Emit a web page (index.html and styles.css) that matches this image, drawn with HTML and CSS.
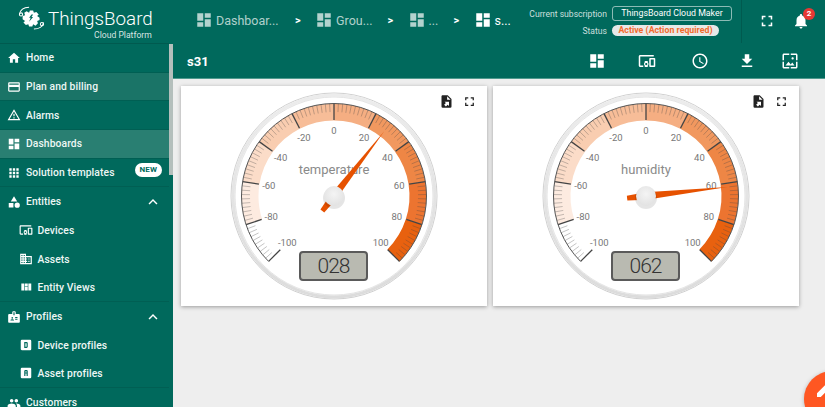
FILE: index.html
```html
<!DOCTYPE html>
<html lang="en">
<head>
    <meta charset="UTF-8">
    <title>ThingsBoard - s31</title>
    <link rel="stylesheet" href="styles.css">
</head>
<body>
    <!-- Material icons used more than once -->
    <svg class="sprite">
        <symbol id="i-dashboard" viewBox="0 0 24 24"><path d="M3 13h8V3H3v10zm0 8h8v-6H3v6zm10 0h8V11h-8v10zm0-18v6h8V3h-8z"/></symbol>
        <symbol id="i-less" viewBox="0 0 24 24"><path d="M12 8l-6 6 1.41 1.41L12 10.83l4.59 4.58L18 14z"/></symbol>
        <symbol id="i-fullscreen" viewBox="0 0 24 24"><path d="M7 14H5v5h5v-2H7v-3zm-2-4h2V7h3V5H5v5zm12 7h-3v2h5v-5h-2v3zM14 5v2h3v3h2V5h-5z"/></symbol>
        <symbol id="i-export" viewBox="0 0 24 24"><path d="M6 2C4.89 2 4 2.9 4 4v16a2 2 0 0 0 2 2h12a2 2 0 0 0 2-2V8l-6-6M13 3.5L18.5 9H13M8.93 12.22H16v7.07l-2.12-2.12L11.05 20l-2.83-2.83 2.83-2.82"/></symbol>
    </svg>

    <div class="app">
        <aside class="sidebar">
            <div class="logo">
                <svg class="logo-mark" viewBox="0 0 36 32">
                    <path class="logo-wire" d="M3 11C4 5 9 2 15 2M33 21c-1 5-6 8-12 8"/>
                    <circle class="logo-wire" cx="5" cy="11" r="2"/>
                    <circle class="logo-wire" cx="31" cy="23" r="2"/>
                    <path class="logo-gear" fill-rule="evenodd" d="M16 6h4l1 3 3-1 3 3-2 2 3 2v3l-3 1 1 3-3 3-3-2-1 3h-4l-1-3-3 1-3-3 2-2-3-2v-4l3-1-1-3 3-2 3 2zM18 11l-3 4h2l-2 5 5-6h-2l2-3z"/>
                </svg>
                <div class="logo-text">
                    <span class="logo-name">ThingsBoard</span>
                    <span class="logo-sub">Cloud Platform</span>
                </div>
            </div>
            <nav class="menu">
                <a class="menu-item">
                    <svg class="menu-icon" viewBox="0 0 24 24"><path d="M10 20v-6h4v6h5v-8h3L12 3 2 12h3v8z"/></svg>Home
                </a>
                <a class="menu-item tint">
                    <svg class="menu-icon" viewBox="0 0 24 24"><path d="M20 4H4c-1.11 0-1.99.89-1.99 2L2 18c0 1.11.89 2 2 2h16c1.11 0 2-.89 2-2V6c0-1.11-.89-2-2-2zm0 14H4v-6h16v6zm0-10H4V6h16v2z"/></svg>Plan and billing
                </a>
                <a class="menu-item">
                    <svg class="menu-icon" viewBox="0 0 24 24"><path d="M12 5.99L19.53 19H4.47L12 5.99M12 2L1 21h22L12 2zm1 14h-2v2h2v-2zm0-6h-2v4h2v-4z"/></svg>Alarms
                </a>
                <a class="menu-item active">
                    <svg class="menu-icon"><use href="#i-dashboard"/></svg>Dashboards
                </a>
                <a class="menu-item">
                    <svg class="menu-icon" viewBox="0 0 24 24"><path d="M4 8h4V4H4v4zm6 12h4v-4h-4v4zm-6 0h4v-4H4v4zm0-6h4v-4H4v4zm6 0h4v-4h-4v4zm6-10v4h4V4h-4zm-6 4h4V4h-4v4zm6 6h4v-4h-4v4zm0 6h4v-4h-4v4z"/></svg>Solution templates
                    <span class="new-badge">NEW</span>
                </a>
                <a class="menu-item">
                    <svg class="menu-icon" viewBox="0 0 24 24"><path d="M12 2l-5.5 9h11L12 2zm5.5 11a4.5 4.5 0 1 0 0 9 4.5 4.5 0 0 0 0-9zM3 21.5h8v-8H3v8z"/></svg>Entities
                    <svg class="menu-arrow"><use href="#i-less"/></svg>
                </a>
                <a class="menu-item sub">
                    <svg class="menu-icon" viewBox="0 0 24 24"><path d="M3 6h18V4H3c-1.1 0-2 .9-2 2v12c0 1.1.9 2 2 2h4v-2H3V6zm10 6H9v1.78c-.61.55-1 1.33-1 2.22s.39 1.67 1 2.22V20h4v-1.78c.61-.55 1-1.34 1-2.22s-.39-1.67-1-2.22V12zm-2 5.5c-.83 0-1.5-.67-1.5-1.5s.67-1.5 1.5-1.5 1.5.67 1.5 1.5-.67 1.5-1.5 1.5zM22 8h-6c-.5 0-1 .5-1 1v10c0 .5.5 1 1 1h6c.5 0 1-.5 1-1V9c0-.5-.5-1-1-1zm-1 10h-4v-8h4v8z"/></svg>Devices
                </a>
                <a class="menu-item sub">
                    <svg class="menu-icon" viewBox="0 0 24 24"><path d="M12 7V3H2v18h20V7H12zM6 19H4v-2h2v2zm0-4H4v-2h2v2zm0-4H4V9h2v2zm0-4H4V5h2v2zm4 12H8v-2h2v2zm0-4H8v-2h2v2zm0-4H8V9h2v2zm0-4H8V5h2v2zm10 12h-8v-2h2v-2h-2v-2h2v-2h-2V9h8v10zm-2-8h-2v2h2v-2zm0 4h-2v2h2v-2z"/></svg>Assets
                </a>
                <a class="menu-item sub">
                    <svg class="menu-icon" viewBox="0 0 24 24"><path d="M10 18h5v-6h-5v6zm-6 0h5V6H4v12zm12 0h5V6h-5v12zM10 6v5h5V6h-5z"/></svg>Entity Views
                </a>
                <a class="menu-item">
                    <svg class="menu-icon" viewBox="0 0 24 24"><path d="M20 7h-5V4c0-1.1-.9-2-2-2h-2c-1.1 0-2 .9-2 2v3H4c-1.1 0-2 .9-2 2v11c0 1.1.9 2 2 2h16c1.1 0 2-.9 2-2V9c0-1.1-.9-2-2-2zM9 12c.83 0 1.5.67 1.5 1.5S9.83 15 9 15s-1.5-.67-1.5-1.5S8.17 12 9 12zm3 6H6v-.75c0-1 2-1.5 3-1.5s3 .5 3 1.5V18zm1-9h-2V4h2v5zm5 7.5h-4V15h4v1.5zm0-3h-4V12h4v1.5z"/></svg>Profiles
                    <svg class="menu-arrow"><use href="#i-less"/></svg>
                </a>
                <a class="menu-item sub">
                    <svg class="menu-icon" viewBox="0 0 24 24"><path d="M9 7v10h4a2 2 0 0 0 2-2V9a2 2 0 0 0-2-2H9m2 2h2v6h-2V9M5 3h14a2 2 0 0 1 2 2v14a2 2 0 0 1-2 2H5c-1.11 0-2-.9-2-2V5a2 2 0 0 1 2-2z"/></svg>Device profiles
                </a>
                <a class="menu-item sub">
                    <svg class="menu-icon" viewBox="0 0 24 24"><path d="M11 7a2 2 0 0 0-2 2v8h2v-4h2v4h2V9a2 2 0 0 0-2-2h-2m0 2h2v2h-2V9M5 3h14a2 2 0 0 1 2 2v14a2 2 0 0 1-2 2H5a2 2 0 0 1-2-2V5a2 2 0 0 1 2-2z"/></svg>Asset profiles
                </a>
                <a class="menu-item">
                    <svg class="menu-icon" viewBox="0 0 24 24"><path d="M16 11c1.66 0 2.99-1.34 2.99-3S17.66 5 16 5c-1.66 0-3 1.34-3 3s1.34 3 3 3zm-8 0c1.66 0 2.99-1.34 2.99-3S9.66 5 8 5C6.34 5 5 6.34 5 8s1.34 3 3 3zm0 2c-2.33 0-7 1.17-7 3.5V19h14v-2.5c0-2.33-4.67-3.5-7-3.5zm8 0c-.29 0-.62.02-.97.05 1.16.84 1.97 1.97 1.97 3.45V19h6v-2.5c0-2.33-4.67-3.5-7-3.5z"/></svg>Customers
                </a>
            </nav>
            <div class="scroll-thumb"></div>
        </aside>

        <div class="main">
            <header class="topbar">
                <div class="crumbs">
                    <span class="crumb crumb-first"><svg class="crumb-icon"><use href="#i-dashboard"/></svg>Dashboar...</span>
                    <span class="crumb-sep">&gt;</span>
                    <span class="crumb crumb-second"><svg class="crumb-icon"><use href="#i-dashboard"/></svg>Grou...</span>
                    <span class="crumb-sep">&gt;</span>
                    <span class="crumb crumb-third"><svg class="crumb-icon"><use href="#i-dashboard"/></svg>...</span>
                    <span class="crumb-sep">&gt;</span>
                    <span class="crumb current"><svg class="crumb-icon"><use href="#i-dashboard"/></svg>s...</span>
                </div>
                <div class="subscription">
                    <span class="sub-label">Current subscription</span>
                    <span class="plan-name">ThingsBoard Cloud Maker</span>
                    <span class="sub-label">Status</span>
                    <span class="plan-status">Active (Action required)</span>
                </div>
                <div class="top-actions">
                    <svg class="top-icon"><use href="#i-fullscreen"/></svg>
                    <span class="bell">
                        <svg class="top-icon" viewBox="0 0 24 24"><path d="M12 22c1.1 0 2-.9 2-2h-4c0 1.1.89 2 2 2zm6-6v-5c0-3.07-1.64-5.64-4.5-6.32V4c0-.83-.67-1.5-1.5-1.5s-1.5.67-1.5 1.5v.68C7.63 5.36 6 7.92 6 11v5l-2 2v1h16v-1l-2-2z"/></svg>
                        <span class="bell-count">2</span>
                    </span>
                </div>
            </header>

            <div class="titlebar">
                <h1 class="dash-title">s31</h1>
                <div class="title-actions">
                    <svg class="title-icon"><use href="#i-dashboard"/></svg>
                    <svg class="title-icon" viewBox="0 0 24 24"><path d="M3 6h18V4H3c-1.1 0-2 .9-2 2v12c0 1.1.9 2 2 2h4v-2H3V6zm10 6H9v1.78c-.61.55-1 1.33-1 2.22s.39 1.67 1 2.22V20h4v-1.78c.61-.55 1-1.34 1-2.22s-.39-1.67-1-2.22V12zm-2 5.5c-.83 0-1.5-.67-1.5-1.5s.67-1.5 1.5-1.5 1.5.67 1.5 1.5-.67 1.5-1.5 1.5zM22 8h-6c-.5 0-1 .5-1 1v10c0 .5.5 1 1 1h6c.5 0 1-.5 1-1V9c0-.5-.5-1-1-1zm-1 10h-4v-8h4v8z"/></svg>
                    <svg class="title-icon" viewBox="0 0 24 24"><path d="M11.99 2C6.47 2 2 6.48 2 12s4.47 10 9.99 10C17.52 22 22 17.52 22 12S17.52 2 11.99 2zM12 20c-4.42 0-8-3.58-8-8s3.58-8 8-8 8 3.58 8 8-3.58 8-8 8zm.5-13H11v6l5.25 3.15.75-1.23-4.5-2.67z"/></svg>
                    <svg class="title-icon" viewBox="0 0 24 24"><path d="M19 9h-4V3H9v6H5l7 7 7-7zM5 18v2h14v-2H5z"/></svg>
                    <svg class="title-icon" viewBox="0 0 24 24"><path d="M4 4h7V2H4c-1.1 0-2 .9-2 2v7h2V4zm6 9l-4 5h12l-3-4-2.03 2.71L10 13zm7-4.5c0-.83-.67-1.5-1.5-1.5S14 7.67 14 8.5s.67 1.5 1.5 1.5S17 9.33 17 8.5zM20 2h-7v2h7v7h2V4c0-1.1-.9-2-2-2zm0 18h-7v2h7c1.1 0 2-.9 2-2v-7h-2v7zM4 13H2v7c0 1.1.9 2 2 2h7v-2H4v-7z"/></svg>
                </div>
            </div>

            <main class="widgets">
                <section class="widget" data-label="temperature" data-value="28"></section>
                <section class="widget" data-label="humidity" data-value="62"></section>
            </main>

            <button class="fab">
                <svg class="fab-icon" viewBox="0 0 24 24"><path d="M3 17.25V21h3.75L17.81 9.94l-3.75-3.75L3 17.25zM20.71 7.04a1 1 0 0 0 0-1.41l-2.34-2.34a1 1 0 0 0-1.41 0l-1.83 1.83 3.75 3.75 1.83-1.83z"/></svg>
            </button>
        </div>
    </div>

    <script src="script.js"></script>
</body>
</html>
```

FILE: styles.css
```css
* {
    box-sizing: border-box;
    margin: 0;
    padding: 0;
}

html, body {
    height: 100%;
    overflow: hidden;
}

body {
    font-family: Roboto, sans-serif;
    background-color: #eeeeee;
}

.sprite {
    display: none;
}

.app {
    display: flex;
    height: 407px;
}

/* Sidebar */
.sidebar {
    position: relative;
    flex: 0 0 173px;
    padding-right: 4px;
    background-color: #00695c;
    color: white;
    overflow: hidden;
}

.logo {
    display: flex;
    height: 44px;
    padding: 4px 0 0 17px;
    gap: 2px;
    border-bottom: 1px solid #005a4f;
}

.logo-mark {
    width: 29px;
    height: 29px;
    flex: none;
}

.logo-wire {
    fill: none;
    stroke: white;
    stroke-width: 1.3;
}

.logo-gear {
    fill: white;
}

.logo-text {
    display: flex;
    flex-direction: column;
    align-items: flex-end;
}

.logo-name {
    font-size: 18.8px;
    font-weight: 300;
    line-height: 24px;
    margin-top: 3px;
}

.logo-sub {
    font-size: 8.6px;
    line-height: 9px;
    margin-right: 1px;
    color: rgba(255,255,255,0.85);
}

.menu-item {
    display: flex;
    align-items: center;
    height: 28.7px;
    padding-left: 7px;
    font-size: 10.3px;
    font-weight: 500;
    letter-spacing: 0.1px;
    color: #eef7f5;
}

.menu-item:nth-child(-n+5),
.menu-item:nth-child(9),
.menu-item:nth-child(12) {
    border-bottom: 1px solid #005f53;
}

.menu-item.sub {
    padding-left: 19px;
}

.menu-item.tint {
    background-color: #1a7467;
}

.menu-item.active {
    background-color: #297f72;
}

.menu-icon {
    width: 14px;
    height: 14px;
    margin-right: 5px;
    fill: white;
    flex: none;
}

.menu-item.sub .menu-icon {
    margin-right: 4.5px;
}

.menu-arrow {
    width: 18px;
    height: 18px;
    margin-left: auto;
    margin-right: 7px;
    fill: white;
}

.new-badge {
    margin-left: auto;
    margin-right: 7px;
    margin-bottom: 6px;
    padding: 0 5px;
    height: 14px;
    line-height: 14px;
    border-radius: 7px;
    background: white;
    color: #00695c;
    font-size: 8px;
    font-weight: 700;
}

.scroll-thumb {
    position: absolute;
    top: 44px;
    right: 0;
    width: 4px;
    height: 131px;
    background-color: #b4bfbc;
}

/* Top bars */
.main {
    position: relative;
    flex: 1;
    min-width: 0;
    overflow: hidden;
}

.topbar {
    display: flex;
    align-items: flex-start;
    height: 44px;
    background-color: #00695c;
    color: white;
}

.crumbs {
    display: flex;
    align-items: center;
    height: 40px;
    padding-left: 22px;
    flex: none;
    width: 342px;
    font-size: 12.5px;
    color: rgba(255,255,255,0.7);
}

.crumb {
    display: flex;
    align-items: center;
    gap: 3px;
}

.crumb-first {
    width: 100px;
}

.crumb-second {
    width: 72.5px;
}

.crumb-third {
    width: 46px;
}

.crumb.current {
    color: white;
}

.crumb-icon {
    width: 18px;
    height: 18px;
    flex: none;
    fill: rgba(255,255,255,0.7);
}

.current .crumb-icon {
    fill: white;
}

.crumb-sep {
    width: 20px;
    font-size: 11px;
    font-weight: 700;
    color: white;
}

.subscription {
    display: grid;
    grid-template-columns: 92px auto;
    justify-content: start;
    align-items: center;
    column-gap: 5px;
    row-gap: 4px;
    width: 227px;
    height: 43px;
    padding-top: 6px;
    align-content: start;
    border-right: 1px solid #005a4f;
    font-size: 8.8px;
}

.sub-label {
    text-align: right;
    font-size: 8.6px;
    color: rgba(255,255,255,0.8);
}

.plan-name {
    width: 120px;
    height: 15px;
    line-height: 13px;
    text-align: center;
    border: 1px solid rgba(255,255,255,0.55);
    border-radius: 3px;
}

.plan-status {
    width: 107px;
    height: 11px;
    line-height: 11px;
    text-align: center;
    border-radius: 6px;
    background-color: #e6e9e8;
    color: #f26b2e;
    font-weight: 700;
}

.top-actions {
    display: flex;
    align-items: center;
    height: 41px;
    padding-left: 16px;
    gap: 16px;
}

.top-icon {
    width: 18px;
    height: 18px;
    fill: white;
    display: block;
}

.bell {
    position: relative;
}

.bell-count {
    position: absolute;
    top: -4px;
    right: -5px;
    width: 12px;
    height: 12px;
    line-height: 12px;
    border-radius: 50%;
    text-align: center;
    background-color: #e53935;
    font-size: 8px;
    font-weight: 700;
}

.titlebar {
    display: flex;
    align-items: center;
    height: 35px;
    padding-left: 14px;
    background-color: #00695c;
    border-bottom: 1px solid #4f9a8e;
    color: white;
}

.dash-title {
    font-size: 13px;
    font-weight: 700;
}

.title-actions {
    display: flex;
    align-items: center;
    margin-left: auto;
    margin-right: 26px;
}

.title-icon {
    width: 18px;
    height: 18px;
    fill: white;
}

/* The five buttons are not evenly spaced */
.title-icon:nth-child(2) {
    margin-left: 32px;
}

.title-icon:nth-child(3) {
    margin-left: 35px;
}

.title-icon:nth-child(4) {
    margin-left: 29px;
}

.title-icon:nth-child(5) {
    margin-left: 25px;
}

/* Gauge widgets */
.widgets {
    display: flex;
    gap: 6.5px;
    padding: 7px 0 0 8px;
}

.widget {
    position: relative;
    display: flex;
    justify-content: center;
    align-items: center;
    flex: 0 0 305.5px;
    height: 220px;
    background: white;
    box-shadow: 0 1px 4px rgba(0,0,0,0.35);
}

.widget-tools {
    position: absolute;
    top: 8px;
    right: 10px;
    display: flex;
    gap: 8px;
}

.widget-tool {
    width: 15px;
    height: 15px;
    fill: #222;
}

.gauge {
    width: 210px;
    height: 210px;
}

.gauge-mark {
    font-size: 9.5px;
    fill: #777;
    text-anchor: middle;
    dominant-baseline: central;
}

.gauge-title {
    font-size: 13px;
    fill: #8a8a8a;
    text-anchor: middle;
    dominant-baseline: central;
}

.gauge-lcd {
    font-size: 21px;
    font-weight: 300;
    letter-spacing: -1px;
    fill: #333;
    text-anchor: middle;
    dominant-baseline: central;
}

.fab {
    position: absolute;
    left: 631px;
    top: 371px;
    width: 56px;
    height: 56px;
    border: none;
    border-radius: 50%;
    background-color: #ff5722;
    box-shadow: 0 1px 4px rgba(0,0,0,0.25);
}

.fab-icon {
    position: absolute;
    left: 10px;
    top: 5px;
    width: 24px;
    height: 24px;
    fill: white;
}
```

FILE: script.js
```javascript
// Colour of each 20 unit band, from -80 up to 100
const bandColors = ['#fdebe0', '#fbdcc8', '#f9cdb0', '#f7bd98', '#f5ae82', '#f1985f', '#ee8645', '#ec7430', '#e8610f'];

const CX = 105;
const CY = 105;

function valueToAngle(value) {
    return (value + 100) * 1.35 - 135;
}

function polar(angle, radius) {
    const rad = (angle - 90) * Math.PI / 180;
    return [CX + radius * Math.cos(rad), CY + radius * Math.sin(rad)];
}

function arc(from, to, radius) {
    const [x1, y1] = polar(from, radius);
    const [x2, y2] = polar(to, radius);
    const large = to - from > 180 ? 1 : 0;
    return `M${x1.toFixed(2)} ${y1.toFixed(2)}A${radius} ${radius} 0 ${large} 1 ${x2.toFixed(2)} ${y2.toFixed(2)}`;
}

function tick(value, inner, outer, color, width) {
    const [x1, y1] = polar(valueToAngle(value), inner);
    const [x2, y2] = polar(valueToAngle(value), outer);
    return `<line x1="${x1.toFixed(2)}" y1="${y1.toFixed(2)}" x2="${x2.toFixed(2)}" y2="${y2.toFixed(2)}" stroke="${color}" stroke-width="${width}"/>`;
}

function gaugeSvg(label, value, index) {
    let bands = '';
    bandColors.forEach((color, i) => {
        const from = valueToAngle(-80 + i * 20);
        const to = valueToAngle(-60 + i * 20);
        bands += `<path d="${arc(from, to, 84)}" fill="none" stroke="${color}" stroke-width="17"/>`;
    });

    let ticks = '';
    let marks = '';
    for (let v = -100; v <= 100; v += 2) {
        if (v % 20 === 0) {
            ticks += tick(v, 76, 92.5, '#444', 1.3);
            const [x, y] = polar(valueToAngle(v), 66);
            marks += `<text class="gauge-mark" x="${x.toFixed(1)}" y="${y.toFixed(1)}">${v}</text>`;
        } else {
            ticks += tick(v, 84, 92.5, 'rgba(70,70,70,0.4)', 0.8);
        }
    }

    const digits = String(value).padStart(3, '0');
    const angle = valueToAngle(value);

    return `
        <svg class="gauge" viewBox="0 0 210 210">
            <defs>
                <linearGradient id="rim${index}" x1="0" y1="0" x2="0" y2="1">
                    <stop offset="0" stop-color="#ececec"/>
                    <stop offset="1" stop-color="#dcdcdc"/>
                </linearGradient>
                <radialGradient id="hub${index}" cx="0.5" cy="0.4" r="0.6">
                    <stop offset="0" stop-color="#f4f4f4"/>
                    <stop offset="1" stop-color="#e2e2e2"/>
                </radialGradient>
            </defs>
            <circle cx="${CX}" cy="${CY}" r="103" fill="none" stroke="#cfcfcf" stroke-width="1"/>
            <circle cx="${CX}" cy="${CY}" r="101" fill="white" stroke="url(#rim${index})" stroke-width="3"/>
            <circle cx="${CX}" cy="${CY}" r="99" fill="none" stroke="#d8d8d8" stroke-width="0.7"/>
            ${bands}
            ${ticks}
            <path d="${arc(-135, 135, 92.5)}" fill="none" stroke="#555" stroke-width="1"/>
            ${marks}
            <text class="gauge-title" x="${CX}" y="78">${label}</text>
            <rect x="71" y="161" width="67" height="28" rx="3" fill="#b9bab1" stroke="#5a5a5a" stroke-width="2"/>
            <text class="gauge-lcd" x="104.5" y="175">${digits}</text>
            <polygon points="${CX},${CY - 82} ${CX + 3.8},${CY} ${CX + 2.4},${CY + 19} ${CX - 2.4},${CY + 19} ${CX - 3.8},${CY}" fill="#e65100" transform="rotate(${angle} ${CX} ${CY})"/>
            <circle cx="${CX}" cy="${CY + 2}" r="11" fill="#000" opacity="0.1"/>
            <circle cx="${CX}" cy="${CY}" r="10" fill="url(#hub${index})"/>
        </svg>
        <div class="widget-tools">
            <svg class="widget-tool"><use href="#i-export"/></svg>
            <svg class="widget-tool"><use href="#i-fullscreen"/></svg>
        </div>`;
}

document.querySelectorAll('.widget').forEach((widget, index) => {
    widget.innerHTML = gaugeSvg(widget.dataset.label, Number(widget.dataset.value), index);
});
```
